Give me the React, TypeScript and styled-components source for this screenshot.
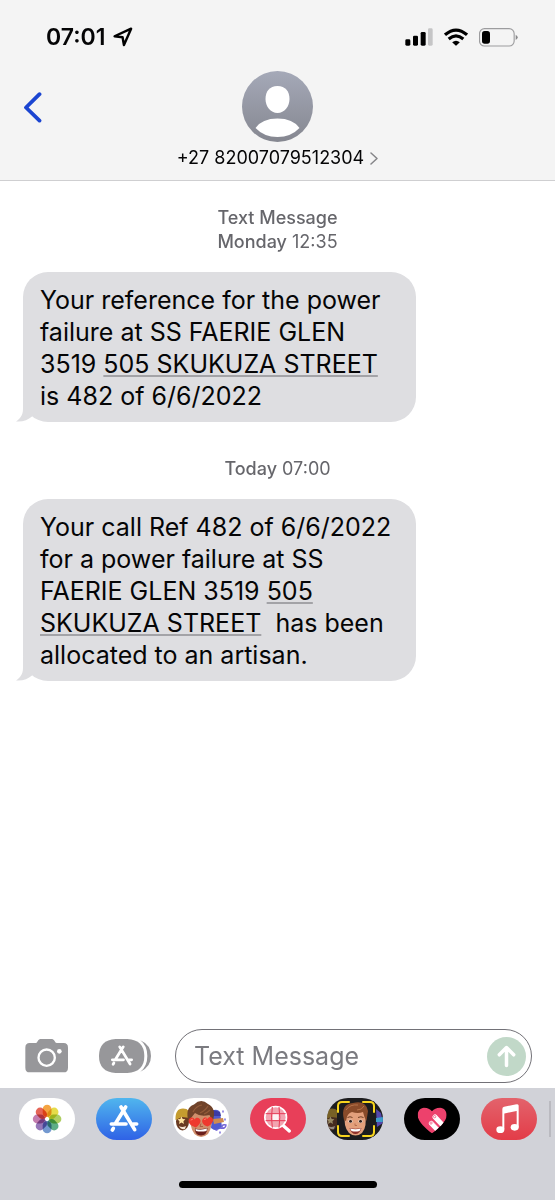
import React from "react";
import styled, { createGlobalStyle } from "styled-components";

const GlobalStyle = createGlobalStyle`
  *, *::before, *::after { box-sizing: border-box; }
  body {
    margin: 0;
    background: #fff;
    color: #050506;
    font-family: Inter, "Liberation Sans", sans-serif;
  }
  button, input { font: inherit; color: inherit; }
  svg { display: block; flex: none; }
`;

const Screen = styled.div`
  display: flex;
  flex-direction: column;
  min-height: 100vh;
`;

const Header = styled.header`
  background: #f4f4f4;
  border-bottom: 1px solid #cfcfd1;
`;

const StatusBar = styled.div`
  display: flex;
  align-items: center;
  justify-content: space-between;
  height: 71px;
  padding: 3px 37px 0 46px;
`;

const Clock = styled.div`
  display: flex;
  align-items: center;
  gap: 8px;
  font-size: 23px;
  font-weight: 600;
  line-height: 28px;
`;

const Indicators = styled.div`
  display: flex;
  align-items: center;
  gap: 11px;
`;

const ContactBar = styled.div`
  display: grid;
  grid-template-columns: 1fr auto 1fr;
  align-items: start;
  height: 109px;
`;

const IconButton = styled.button`
  display: flex;
  align-items: center;
  justify-content: center;
  padding: 0;
  border: 0;
  background: none;
  cursor: pointer;
`;

const BackButton = styled(IconButton)`
  justify-self: start;
  height: 72px;
  padding: 0 16px 0 23px;
`;

const Contact = styled(IconButton)`
  flex-direction: column;
  gap: 5px;
`;

const ContactNumber = styled.span`
  display: flex;
  align-items: center;
  gap: 6px;
  font-size: 18px;
  line-height: 22px;
`;

const Conversation = styled.main`
  display: flex;
  flex: 1;
  flex-direction: column;
  align-items: flex-start;
  padding: 25px 23px;
`;

const Stamp = styled.p`
  align-self: center;
  margin: 0;
  color: #66666b;
  font-size: 18px;
  line-height: 24px;
  text-align: center;
`;

const StampLabel = styled.span`
  font-weight: 500;
`;

const Bubble = styled.article`
  position: relative;
  max-width: 393px;
  margin: 18px 0 35px;
  padding: 12px 16px 10px 17px;
  border-radius: 25px;
  background: #dedee1;
  font-size: 25px;
  line-height: 32px;
`;

const Tail = styled.svg`
  position: absolute;
  bottom: 0;
  left: -7px;
`;

const Address = styled.a`
  color: inherit;
  text-decoration: underline 2px #a3a3a7;
  text-decoration-skip-ink: none;
  text-underline-offset: 2px;
`;

const Composer = styled.form`
  display: flex;
  align-items: center;
  padding: 0 23px 5px 25px;
`;

const AppsButton = styled(IconButton)`
  margin: 0 24px 0 30px;
`;

const Field = styled.label`
  display: flex;
  flex: 1;
  align-items: center;
  min-width: 0;
  height: 54px;
  padding: 0 5px 0 18px;
  border: 1px solid #727177;
  border-radius: 27px;
`;

const MessageInput = styled.input`
  flex: 1;
  min-width: 0;
  padding: 0;
  border: 0;
  outline: 0;
  background: none;
  font-size: 25px;
  line-height: 32px;
  &::placeholder { color: #7b7b80; opacity: 1; }
`;

const Footer = styled.footer`
  display: flex;
  flex-direction: column;
  align-items: center;
  justify-content: space-between;
  height: 112px;
  padding: 10px 0 12px;
  background: #d1d2d8;
`;

const AppStrip = styled.nav`
  display: flex;
  align-items: center;
  gap: 21px;
  width: 100%;
  padding-left: 19px;
  overflow: hidden;
`;

const AppPill = styled.button<{ $fill: string }>`
  flex: none;
  width: 56px;
  height: 42px;
  padding: 0;
  overflow: hidden;
  border: 0;
  border-radius: 21px;
  background: ${(p) => p.$fill};
  cursor: pointer;
`;

const StripDivider = styled.div`
  flex: none;
  width: 2px;
  height: 36px;
  margin-left: -9px;
  background: #babac0;
`;

const HomeBar = styled.div`
  width: 198px;
  height: 7px;
  border-radius: 4px;
  background: #000;
`;

const LocationIcon = () => (
  <svg width="20" height="20" viewBox="0 0 19 19" aria-hidden="true">
    <path d="M1.5 8.8 17.2 1.6 10.4 17.2 9.1 9.8Z" fill="none" stroke="#000" strokeWidth="2.3" strokeLinejoin="round" />
  </svg>
);

const SignalIcon = () => (
  <svg width="28" height="18" viewBox="0 0 84 54" role="img" aria-label="Signal">
    <rect x="1" y="34" width="15" height="19" rx="4" />
    <rect x="24" y="23" width="15" height="30" rx="4" />
    <rect x="47" y="12" width="15" height="41" rx="4" />
    <rect x="69" y="1" width="14" height="52" rx="4" fill="#c5c5c6" />
  </svg>
);

const WifiIcon = () => (
  <svg width="24" height="18" viewBox="0 0 72 54" role="img" aria-label="Wi-Fi">
    <g fill="none" stroke="#000" strokeWidth="9.5">
      <path d="M3 20.500Q36-8 69 20.500" />
      <path d="M14 33Q36 14.500 58 33" />
    </g>
    <path d="M24.500 43Q36 34 47.500 43L38 52Q36 54 34 52Z" />
  </svg>
);

const BatteryIcon = () => (
  <svg width="39" height="19" viewBox="0 0 117 57" role="img" aria-label="Battery">
    <rect x="1.500" y="2" width="104" height="52" rx="15" fill="none" stroke="#9c9c9e" strokeWidth="3.400" />
    <rect x="9" y="9" width="24" height="38" rx="8" />
    <path d="M110 20Q116 23 116 28T110 36Z" fill="#88888a" />
  </svg>
);

const BackIcon = () => (
  <svg width="19" height="31" viewBox="0 0 19 31" aria-hidden="true">
    <path d="M16.500 2.200 3 15.500 16.500 28.600" fill="none" stroke="#1b45d1" strokeWidth="3.800" strokeLinecap="round" strokeLinejoin="round" />
  </svg>
);

const AvatarIcon = () => (
  <svg width="71" height="71" viewBox="0 0 71 71" aria-hidden="true">
    <defs>
      <linearGradient id="avatar" x2="0" y2="1">
        <stop stopColor="#a5a9b8" />
        <stop offset="1" stopColor="#858790" />
      </linearGradient>
    </defs>
    <circle cx="35.500" cy="35.500" r="35.500" fill="url(#avatar)" />
    <path d="M35.500 15C27.500 15 23.500 20.500 23.500 28S28.500 42 35.500 42 47.500 35.500 47.500 28 43.500 15 35.500 15Z" fill="#fff" />
    <path d="M13.500 57Q20 47.500 35.500 47.500T57.500 57Q49 66 35.500 66T13.500 57Z" fill="#fff" />
  </svg>
);

const DisclosureIcon = () => (
  <svg width="8" height="13" viewBox="0 0 8 13" aria-hidden="true">
    <path d="m1 1 6 5.500L1 12" fill="none" stroke="#858588" strokeWidth="1.500" strokeLinecap="round" strokeLinejoin="round" />
  </svg>
);

const BubbleTail = () => (
  <Tail width="24" height="24" viewBox="0 0 24 24" aria-hidden="true">
    <path d="M7 0V11C7 17 4 21 0 23.500 7 24 12 22 16 18.500L24 10V0Z" fill="#dedee1" />
  </Tail>
);

const CameraIcon = () => (
  <svg width="44" height="34" viewBox="0 0 132 102" aria-hidden="true">
    <path d="M14 12H33C37 12 39 0 46 0H81C88 0 90 12 95 12H116Q129 12 129 26V86Q129 100 116 100H14Q1 100 1 86V26Q1 12 14 12Z" fill="#97979a" />
    <circle cx="65" cy="56" r="24.500" fill="none" stroke="#fff" strokeWidth="7" />
    <circle cx="103" cy="37" r="7" fill="#fff" />
  </svg>
);

const AppStoreGlyph = () => (
  <g fill="none" stroke="#fff" strokeWidth="11" strokeLinecap="round">
    <path d="M51 6 20 56M8 57H52M74 57H84M37 6 78 74M14 70 11 75" />
  </g>
);

const AppsIcon = () => (
  <svg width="52" height="34" viewBox="0 0 156 102" aria-hidden="true">
    <path d="M50 0H85Q136 3 136 51T85 102H50Q0 99 0 51T50 0Z" fill="#97979a" />
    <path d="M124 4Q156 18 156 51T124 98Q145 82 145 51T124 4Z" fill="#97979a" />
    <g transform="translate(34 19) scale(.76)">
      <AppStoreGlyph />
    </g>
  </svg>
);

const SendIcon = () => (
  <svg width="39" height="39" viewBox="0 0 39 39" aria-hidden="true">
    <circle cx="19.500" cy="19.500" r="19.500" fill="#c1d8c8" />
    <path d="M19.500 28.500V11M12.300 17.800 19.500 10.500 26.700 17.800" fill="none" stroke="#fff" strokeWidth="3.500" strokeLinecap="round" strokeLinejoin="round" />
  </svg>
);

const petals = ["#f39a2d", "#e4d936", "#a5c951", "#4ca579", "#648ecb", "#8b69b2", "#bd6fa6", "#e25445"];

const PhotosArt = () => (
  <svg width="56" height="42" viewBox="0 0 56 42" aria-hidden="true">
    {petals.map((color, i) => (
      <rect key={color} x="23.700" y="6.700" width="8.800" height="12.400" rx="4.400" fill={color} transform={`rotate(${i * 45} 28.100 21)`} style={{ mixBlendMode: "multiply" }} opacity=".9" />
    ))}
    <circle cx="28.100" cy="21" r="1.600" fill="#fff" />
  </svg>
);

const AppStoreArt = () => (
  <svg width="56" height="42" viewBox="0 0 168 126" aria-hidden="true">
    <g transform="translate(38 21)">
      <AppStoreGlyph />
    </g>
  </svg>
);

const SideFaces = () => (
  <>
    <ellipse cx="9.500" cy="23.500" rx="6.500" ry="9" fill="#6a3b22" />
    <path d="M2.500 22Q2 10.500 10 10.500T17 20L9 19Z" fill="#c59c2f" />
    <path d="m8.500 18.500 1.200 2.400 2.700.4-2 1.900.5 2.700-2.400-1.300-2.400 1.300.4-2.700-2-1.900 2.800-.4Z" fill="#ffe4a0" />
    <path d="M6 28Q9 30 13 28L12 31Q8 32 6 28Z" fill="#f7e5d2" />
    <path d="M39 13Q44 10 47 14L49 29Q44 35 38 30Z" fill="#515bd0" />
    <path d="M40 12 47 14 48 18H40Z" fill="#3c3ba5" />
    <path d="M40 21 50 20 51 24 41 26Z" fill="#d08b4f" />
  </>
);

const BoyHead = () => (
  <>
    <path d="M17.500 15H38.500Q40 29 35 36 28 42 21.500 36 16 29 17.500 15Z" fill="#cf8f6c" />
    <path d="M16 25Q11 10 21 6.500 28 0 35 6 44 10 39.500 24L36.500 17Q27 19 22 15L18 20Z" fill="#70432a" />
    <path d="M20 14Q23 8 29 7M27 15Q33 12 35 8M31 16Q35 14 37 12" fill="none" stroke="#925b3a" strokeWidth="1.200" />
  </>
);

const MemojiArt = () => (
  <svg width="56" height="42" viewBox="0 0 56 42" aria-hidden="true">
    <SideFaces />
    <path d="M47 30Q53 31 53 27 49 26 49 29M50 14V13M43 32H44M52 22V21M47 34V35" fill="none" stroke="#7364d7" strokeWidth="1.400" strokeLinecap="round" />
    <BoyHead />
    <path d="M22 30.500Q28 32 34.500 30 34 37.500 28 37.500T22 30.500Z" fill="#6b1f1b" />
    <path d="M22.500 31Q28 32.500 34 30.500L33.500 33Q28 34 23 33Z" fill="#fff" />
    <path d="M28 25.500 27 28.500H30" fill="none" stroke="#a96044" />
    <path d="M23 29.500C18 28 14.500 25 16 21.500 17.500 18.500 21 19.500 21.500 21.500 23 18.500 27 19.500 27.500 22.500 27.800 25 25 28 23 29.500ZM34.500 28.500C31 27.500 28 24.500 29.500 21.500 31 18.500 34 19 34.500 21 36 18 39.500 18.500 40 21.500 40.500 24.500 37 27.500 34.500 28.500Z" fill="#ee392e" />
    <path d="M18 22 19.500 21.300M31.500 21.500 33 20.800" stroke="#ff806c" strokeLinecap="round" />
  </svg>
);

const CameraMemojiArt = () => (
  <svg width="56" height="42" viewBox="0 0 56 42" aria-hidden="true">
    <g opacity=".55" transform="translate(-5 0)">
      <SideFaces />
    </g>
    <path d="M49 11 54 15 56 25 50 29Z" fill="#5548ac" />
    <path d="M49 20 56 19V24H49Z" fill="#3e9bca" />
    <rect x="10" y="3" width="38" height="36" fill="#1c1c1e" />
    <path d="M18 14H38Q40.500 29 35 35 28.500 40 22 35 16 29 18 14Z" fill="#e3a07c" />
    <path d="M17 22Q13 6 26 5 39 2 41 13L39.500 23Q37 19 36 14 31 16 25 14 20 15 19 23Z" fill="#894b2a" />
    <path d="M19 12Q23 6 31 7M30 12Q35 12 37 8" fill="none" stroke="#b5744b" />
    <path d="M20.500 19.500Q23 18 25.500 19.500M31 19.500Q34 18 36.500 19.500" fill="none" stroke="#704026" />
    <ellipse cx="23.500" cy="23.300" rx="2" ry="1.800" fill="#fff" />
    <ellipse cx="33.500" cy="23.300" rx="2" ry="1.800" fill="#fff" />
    <circle cx="23.500" cy="23.300" r="1.500" fill="#38241d" />
    <circle cx="33.500" cy="23.300" r="1.500" fill="#38241d" />
    <path d="M28 25.500V27.500H30" fill="none" stroke="#b96e4e" />
    <path d="M22.500 30Q28.500 31.500 34.500 30 32.500 36 28.500 36T22.500 30Z" fill="#8e302b" />
    <path d="M23 30.500Q28.500 32 34 30.500L32.500 33Q28.500 34 24.500 33Z" fill="#fff" />
    <path d="M11 14V8Q11 4 15 4H22M36 4H43Q47 4 47 8V14M11 28V34Q11 38 15 38H22M36 38H43Q47 38 47 34V28" fill="none" stroke="#f8d51d" strokeWidth="2" strokeLinecap="round" />
  </svg>
);

const ImagesArt = () => (
  <svg width="56" height="42" viewBox="0 0 168 126" aria-hidden="true">
    <path d="M101 84 118 99" stroke="#fff" strokeWidth="10" strokeLinecap="round" />
    <circle cx="77" cy="58" r="32.500" fill="#f2a4b0" stroke="#fff" strokeWidth="5" />
    <g fill="none" stroke="#e73b57" strokeWidth="3">
      <path d="M47 47H107M47 68H107M67 27Q62 58 67 89M87 27Q92 58 87 89" />
    </g>
    <path d="M68 49H86V66H68Z" fill="#fff" opacity=".85" />
  </svg>
);

const HeartArt = () => (
  <svg width="56" height="42" viewBox="0 0 168 126" aria-hidden="true">
    <defs>
      <clipPath id="heart">
        <path d="M84 106C68 94 41 72 41 51 41 26 70 22 84 40 98 22 128 26 128 51 128 72 100 94 84 106Z" />
      </clipPath>
    </defs>
    <g clipPath="url(#heart)">
      <rect x="38" y="25" width="94" height="85" fill="#ed416c" />
      <g fill="none" stroke="#fff" strokeWidth="15" strokeLinecap="round">
        <path d="M93 57 122 88M82 76 108 103" />
      </g>
      <path d="M86 69 110 94" stroke="#ed416c" strokeWidth="2" />
      <g fill="none" stroke="#ed416c" strokeWidth="2">
        <circle cx="92" cy="56" r="3.500" />
        <circle cx="81" cy="75" r="3.500" />
      </g>
    </g>
  </svg>
);

const MusicArt = () => (
  <svg width="56" height="42" viewBox="0 0 168 126" aria-hidden="true">
    <path d="M67 94V33Q67 30 70 29L107 22Q110 21 110 24V88" fill="none" stroke="#fff" strokeWidth="6" />
    <path d="M67 30 110 21V38L67 47Z" fill="#fff" />
    <ellipse cx="58" cy="95" rx="12" ry="10" fill="#fff" />
    <ellipse cx="101" cy="88" rx="12" ry="10" fill="#fff" />
  </svg>
);

const apps = [
  { name: "Photos", fill: "#fff", Art: PhotosArt },
  { name: "App Store", fill: "linear-gradient(#50b6ee, #2f62e6)", Art: AppStoreArt },
  { name: "Memoji stickers", fill: "#fff", Art: MemojiArt },
  { name: "Images", fill: "#e83f59", Art: ImagesArt },
  { name: "Memoji", fill: "#1c1c1e", Art: CameraMemojiArt },
  { name: "Digital Touch", fill: "#000", Art: HeartArt },
  { name: "Music", fill: "linear-gradient(#e3636c, #e33c48)", Art: MusicArt },
];

export default function App() {
  return (
    <Screen>
      <GlobalStyle />
      <Header>
        <StatusBar>
          <Clock>
            <time>07:01</time>
            <LocationIcon />
          </Clock>
          <Indicators>
            <SignalIcon />
            <WifiIcon />
            <BatteryIcon />
          </Indicators>
        </StatusBar>
        <ContactBar>
          <BackButton type="button" aria-label="Back">
            <BackIcon />
          </BackButton>
          <Contact type="button">
            <AvatarIcon />
            <ContactNumber>
              +27 82007079512304
              <DisclosureIcon />
            </ContactNumber>
          </Contact>
        </ContactBar>
      </Header>

      <Conversation>
        <Stamp>
          <StampLabel>Text Message</StampLabel>
          <br />
          <StampLabel>Monday</StampLabel> 12:35
        </Stamp>
        <Bubble>
          Your reference for the power failure at SS FAERIE GLEN 3519{" "}
          <Address href="#address">505 SKUKUZA STREET</Address> is 482 of 6/6/2022
          <BubbleTail />
        </Bubble>
        <Stamp>
          <StampLabel>Today</StampLabel> 07:00
        </Stamp>
        <Bubble>
          Your call Ref 482 of 6/6/2022 for a power failure at SS FAERIE GLEN 3519{" "}
          <Address href="#address">505 SKUKUZA STREET</Address>
          {"\u00a0 has been allocated to an artisan."}
          <BubbleTail />
        </Bubble>
      </Conversation>

      <Composer onSubmit={(e) => e.preventDefault()}>
        <IconButton type="button" aria-label="Camera">
          <CameraIcon />
        </IconButton>
        <AppsButton type="button" aria-label="Apps">
          <AppsIcon />
        </AppsButton>
        <Field>
          <MessageInput type="text" placeholder="Text Message" aria-label="Text Message" />
          <IconButton type="submit" aria-label="Send">
            <SendIcon />
          </IconButton>
        </Field>
      </Composer>

      <Footer>
        <AppStrip aria-label="Message apps">
          {apps.map(({ name, fill, Art }) => (
            <AppPill key={name} type="button" aria-label={name} $fill={fill}>
              <Art />
            </AppPill>
          ))}
          <StripDivider />
        </AppStrip>
        <HomeBar />
      </Footer>
    </Screen>
  );
}
